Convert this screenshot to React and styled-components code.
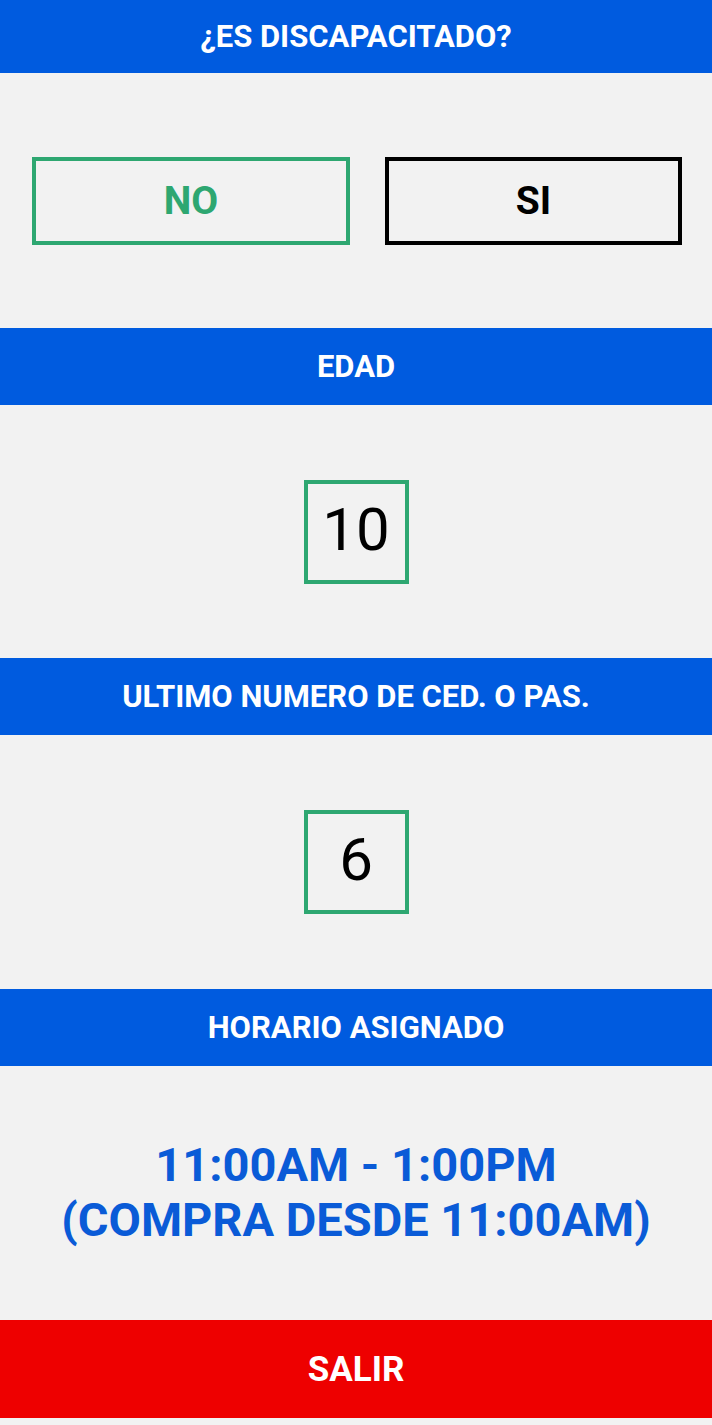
import React from 'react';
import styled, { createGlobalStyle } from 'styled-components';

const GlobalStyle = createGlobalStyle`
  body {
    margin: 0;
    background-color: #f2f2f2;
    font-family: Roboto, "Liberation Sans", sans-serif;
  }
`;

const Page = styled.div`
  width: 712px;
  min-height: 1425px;
  display: flex;
  flex-direction: column;
  background-color: #f2f2f2;
`;

const Header = styled.div`
  height: ${props => props.$height || 77}px;
  background-color: #005bdf;
  color: #fff;
  display: flex;
  align-items: center;
  justify-content: center;
  font-size: 31px;
  font-weight: 700;
`;

const Section = styled.div`
  height: ${props => props.$height || 254}px;
  display: flex;
  align-items: center;
  justify-content: center;
`;

const ChoiceRow = styled.div`
  width: 100%;
  box-sizing: border-box;
  display: grid;
  grid-template-columns: 318px 297px;
  gap: 35px;
  padding-left: 32px;
`;

const Choice = styled.button`
  height: 88px;
  box-sizing: border-box;
  background: transparent;
  border: 4px solid ${props => (props.$selected ? '#2ea771' : '#000')};
  color: ${props => (props.$selected ? '#2ea771' : '#000')};
  font-family: Roboto, "Liberation Sans", sans-serif;
  font-size: 39px;
  font-weight: 700;
  padding: 0;
  cursor: pointer;
`;

const NumberBox = styled.div`
  width: 105px;
  height: 104px;
  box-sizing: border-box;
  border: 4px solid #2ea771;
  padding-bottom: 5px;
  display: flex;
  align-items: center;
  justify-content: center;
  font-size: 60px;
  color: #000;
`;

const Schedule = styled.div`
  color: #0a5bd7;
  font-size: 47px;
  font-weight: 700;
  line-height: 55px;
  text-align: center;
  margin-top: -2px;
`;

const ExitButton = styled.button`
  height: 98px;
  border: none;
  background-color: #ee0000;
  color: #fff;
  font-family: Roboto, "Liberation Sans", sans-serif;
  font-size: 35px;
  font-weight: 700;
  cursor: pointer;
`;

const App = () => {
  const discapacitado = false;

  return (
    <Page>
      <GlobalStyle />
      <Header $height={73}>¿ES DISCAPACITADO?</Header>
      <Section $height={255}>
        <ChoiceRow>
          <Choice $selected={!discapacitado}>NO</Choice>
          <Choice $selected={discapacitado}>SI</Choice>
        </ChoiceRow>
      </Section>
      <Header>EDAD</Header>
      <Section $height={253}>
        <NumberBox>10</NumberBox>
      </Section>
      <Header>ULTIMO NUMERO DE CED. O PAS.</Header>
      <Section>
        <NumberBox>6</NumberBox>
      </Section>
      <Header>HORARIO ASIGNADO</Header>
      <Section>
        <Schedule>
          11:00AM - 1:00PM
          <br />
          (COMPRA DESDE 11:00AM)
        </Schedule>
      </Section>
      <ExitButton>SALIR</ExitButton>
    </Page>
  );
};

export default App;
